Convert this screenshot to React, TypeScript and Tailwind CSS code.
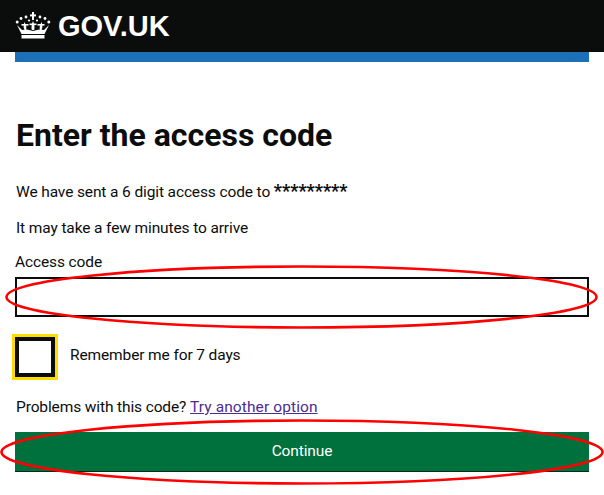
import React from 'react';

const Crown = () => (
  <svg viewBox="0 0 36 28" className="w-[36px] h-[28px] shrink-0" fill="#fff">
    <rect x="17" y="0" width="2" height="8" />
    <rect x="15" y="2.4" width="6" height="2" />
    <circle cx="11" cy="5" r="1.4" />
    <circle cx="25" cy="5" r="1.4" />
    <circle cx="6" cy="6.5" r="1.4" />
    <circle cx="30" cy="6.5" r="1.4" />
    <circle cx="2.2" cy="10" r="1.5" />
    <circle cx="33.8" cy="10" r="1.5" />
    <circle cx="14" cy="8.5" r="1.1" />
    <circle cx="22" cy="8.5" r="1.1" />
    <path d="M18 9 C16.8 12 16 15 16.8 18 L19.2 18 C20 15 19.2 12 18 9Z" />
    <path d="M9.5 10 C8.3 13 8.3 15.5 9.5 18 L11 18 C12 15.5 11 13 9.5 10Z" />
    <path d="M26.5 10 C27.7 13 27.7 15.5 26.5 18 L25 18 C24 15.5 25 13 26.5 10Z" />
    <rect x="6.5" y="12" width="7" height="1.6" />
    <rect x="14.5" y="11.5" width="7" height="1.6" />
    <rect x="22.5" y="12" width="7" height="1.6" />
    <path d="M2 13 L6.5 22 L29.5 22 L34 13 L29 18 L24 17.5 L18 19 L12 17.5 L7 18 Z" />
    <rect x="6.5" y="23" width="23" height="3.5" />
  </svg>
);

const App: React.FC = () => {
  return (
    <div className="relative w-[604px] h-[495px] overflow-hidden bg-white text-[#0b0c0c] font-['Roboto',sans-serif] text-[15.5px] tracking-[-0.12px]">
      <header className="h-[52px] bg-[#0b0c0c] flex items-center pl-[15px] gap-[7px]">
        <Crown />
        <span className="text-white font-['Liberation_Sans',sans-serif] font-bold text-[29px] leading-none tracking-normal">GOV.UK</span>
      </header>

      <main className="px-[15px]">
        <div className="h-[10px] bg-[#1d70b8]"></div>

        <h1 className="mt-[53px] text-[32px] leading-[40px] font-bold tracking-normal pl-px">Enter the access code</h1>

        <p className="mt-[26px] leading-[20px] pl-px">We have sent a 6 digit access code to <span className="font-bold text-[18px] tracking-normal">*********</span></p>
        <p className="mt-[16px] leading-[20px] pl-px">It may take a few minutes to arrive</p>

        <label className="block mt-[14px] leading-[20px]">Access code</label>
        <input className="block mt-[5px] w-full h-[40px] border-2 border-[#0b0c0c] outline-none" />

        <div className="mt-[17px] flex items-center">
          <div className="-ml-[3px] w-[46px] h-[46px] border-[3px] border-[#ffdd00] shrink-0">
            <div className="w-full h-full border-[4px] border-[#0b0c0c]"></div>
          </div>
          <span className="ml-[12px] leading-[20px] -mt-[4px]">Remember me for 7 days</span>
        </div>

        <p className="mt-[17px] leading-[20px] pl-px">
          Problems with this code? <a href="#" className="text-[#4c2c92] underline tracking-[0.1px]">Try another option</a>
        </p>

        <button className="block mt-[15px] w-full h-[39px] bg-[#00703c] text-white text-center leading-[39px] shadow-[0_1px_0_#002d18]">Continue</button>
      </main>

      {/* red annotation rings drawn on top of the screenshot */}
      <svg className="absolute inset-0 pointer-events-none" width="604" height="495" fill="none" stroke="#ff0000" strokeWidth="2.6">
        <ellipse cx="301.5" cy="297" rx="295" ry="30.5" />
        <ellipse cx="302" cy="452" rx="300.5" ry="31.5" />
      </svg>
    </div>
  );
};

export default App;
